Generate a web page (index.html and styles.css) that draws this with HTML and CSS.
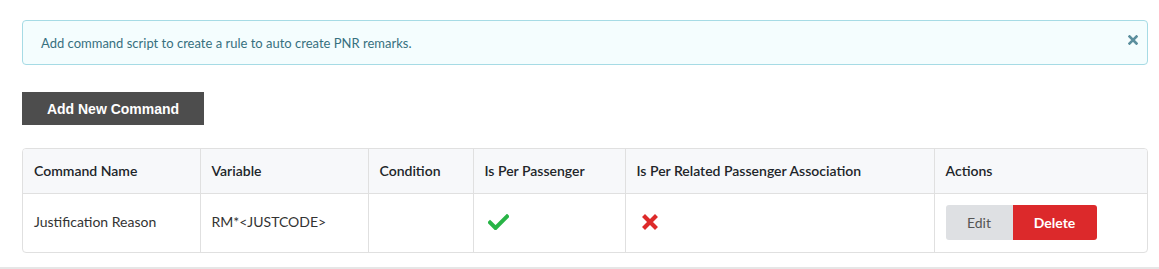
FILE: index.html
```html
<!DOCTYPE html>
<html>
<head>
<meta charset="utf-8">
<link rel="stylesheet" href="styles.css">
</head>
<body>
<div class="page">
  <div class="alert">
    <span class="alert-text">Add command script to create a rule to auto create PNR remarks.</span>
    <svg class="alert-close" width="10" height="10" viewBox="0 0 10 10"><path d="M1.5 1.5 L8.5 8.5 M8.5 1.5 L1.5 8.5" fill="none" stroke="#5b8f9e" stroke-width="2.6" stroke-linecap="square"/></svg>
  </div>
  <button class="btn-add">Add New Command</button>
  <div class="table-wrap">
    <table class="cmd-table">
      <colgroup>
        <col class="c1"><col class="c2"><col class="c3"><col class="c4"><col class="c5"><col class="c6">
      </colgroup>
      <thead>
        <tr>
          <th>Command Name</th>
          <th>Variable</th>
          <th>Condition</th>
          <th>Is Per Passenger</th>
          <th>Is Per Related Passenger Association</th>
          <th>Actions</th>
        </tr>
      </thead>
      <tbody>
        <tr>
          <td>Justification Reason</td>
          <td>RM*&lt;JUSTCODE&gt;</td>
          <td></td>
          <td><svg class="icon-check" width="21" height="16" viewBox="0 0 21 16"><path d="M2 8.5 L7.5 14 L19 2.5" fill="none" stroke="#28b446" stroke-width="4" stroke-linecap="square"/></svg></td>
          <td><svg class="icon-x" width="16" height="16" viewBox="0 0 16 16"><path d="M3 3 L13 13 M13 3 L3 13" fill="none" stroke="#dd2a2a" stroke-width="4.2" stroke-linecap="square"/></svg></td>
          <td class="cell-actions">
            <div class="actions">
              <button class="btn-edit">Edit</button><button class="btn-delete">Delete</button>
            </div>
          </td>
        </tr>
      </tbody>
    </table>
  </div>
</div>
<div class="bottom-bar"></div>
</body>
</html>
```
FILE: styles.css
```css
html, body {
  margin: 0;
  padding: 0;
  background: #ffffff;
  font-family: Lato, "Open Sans", sans-serif;
}
.page {
  padding: 20px 11px 0 22px;
}
.alert {
  display: flex;
  align-items: center;
  justify-content: space-between;
  height: 43px;
  border: 1px solid #a6dbe5;
  border-radius: 4px;
  background: #f4fdfe;
  padding: 0 9px 0 18px;
}
.alert-text {
  font-size: 13px;
  color: #37707f;
  margin-top: 1px;
}
.alert-close {
  display: block;
  margin-top: -5px;
}
.btn-add {
  display: block;
  margin-top: 27px;
  width: 182px;
  height: 33px;
  border: none;
  border-radius: 0;
  background: #4d4d4d;
  color: #ffffff;
  font-family: "Liberation Sans", Arial, sans-serif;
  font-weight: bold;
  font-size: 14px;
  padding: 0;
}
.table-wrap {
  margin-top: 23px;
  border: 1px solid #e0e0e0;
  border-radius: 4px;
  overflow: hidden;
}
.cmd-table {
  width: 100%;
  border-collapse: collapse;
  table-layout: fixed;
  font-size: 14px;
}
.c1 { width: 177px; }
.c2 { width: 168px; }
.c3 { width: 105px; }
.c4 { width: 152px; }
.c5 { width: 309px; }
.c6 { width: auto; }
.cmd-table th {
  background: #f7f8fa;
  text-align: left;
  font-weight: 600;
  color: #212529;
  height: 42px;
  padding: 0 11px 2px;
  border-bottom: 1px solid #e0e0e0;
  border-left: 1px solid #e0e0e0;
}
.cmd-table td {
  height: 55px;
  padding: 0 11px 3px;
  color: #333333;
  border-left: 1px solid #e0e0e0;
  vertical-align: middle;
}
.cmd-table td.cell-actions {
  height: 56px;
  padding-bottom: 2px;
}
.cmd-table th:first-child, .cmd-table td:first-child {
  border-left: none;
}
.icon-check {
  display: block;
  margin-left: 3px;
}
.icon-x {
  display: block;
  margin-left: 5px;
}
.actions {
  display: flex;
}
.btn-edit, .btn-delete {
  height: 35px;
  border: none;
  font-family: Lato, sans-serif;
  font-size: 14px;
  padding: 0;
}
.btn-edit {
  width: 67px;
  background: #dee0e3;
  color: #555555;
  border-radius: 3px 0 0 3px;
}
.btn-delete {
  width: 84px;
  background: #dc292b;
  color: #ffffff;
  font-weight: bold;
  border-radius: 0 3px 3px 0;
}
.bottom-bar {
  margin-top: 14px;
  height: 3px;
  background: #e6e6e6;
}
```
